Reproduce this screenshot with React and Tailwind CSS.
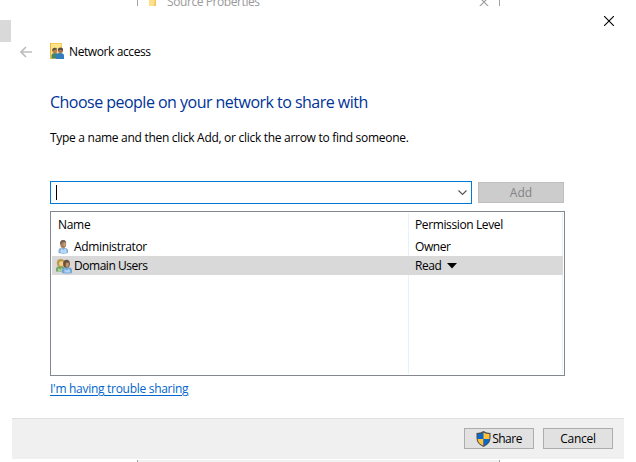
import React from "react";

function FolderUsers() {
  return (
    <svg width="14" height="17" viewBox="0 0 14 17" className="block">
      <path d="M0 0h12v16H0z" fill="#f3cd58" />
      <path d="M1 1h10v14H1z" fill="#ffe389" />
      <path d="M0 0h1v16H0z" fill="#e8b93d" />
      <path d="M1.500 15.500v-3q0-2.500 3.500-2.500t3.500 2.500v3z" fill="#43866a" />
      <circle cx="4.800" cy="7.700" r="2.500" fill="#b98254" />
      <path d="M2.300 8V6q2.500-2.500 5 0l-2 .7z" fill="#5b5440" />
      <path d="M6 16v-3.500q0-2.500 4-2.500t4 2.500V16z" fill="#2f7cc0" />
      <circle cx="10.500" cy="7.500" r="2.500" fill="#a86f48" />
      <path d="M8 7.500V5.700Q10.500 3.500 13 5.700v2L11 6.500z" fill="#504a47" />
    </svg>
  );
}

function Person() {
  return (
    <svg width="16" height="16" viewBox="0 0 16 16" className="block">
      <path d="M2.500 14v-3Q3 8.500 7 8.500T12 11v3q-4.500 1.500-9.500 0z" fill="#86afd8" />
      <path d="M4.500 13.700v-2.500l1-2 2 2 2-2 1 2.500v2.200z" fill="#b8d9f6" />
      <ellipse cx="7.200" cy="5" rx="3" ry="3.900" fill="#a77c5a" />
      <path d="M4.200 5.500V3q.5-2 3-2t3 3L7.500 3z" fill="#6e6258" />
      <path d="M7.500 3.500h2v3.500h-2z" fill="#cba178" />
    </svg>
  );
}

function People() {
  return (
    <svg width="16" height="16" viewBox="0 0 16 16" className="block">
      <path d="M0 13.500v-3q.5-2.500 4.500-2.500t4.500 2.500v3z" fill="#71a269" />
      <path d="M1.800 13v-3L4.500 11.500l1-2 2 3.500z" fill="#a7d293" />
      <circle cx="4.700" cy="5" r="3.900" fill="#bd9b48" />
      <circle cx="5.500" cy="5.700" r="2.400" fill="#f0d094" />
      <path d="M6 15v-3.500q.5-2.500 5-2.500t5 2.500V15q-5 1-10 0z" fill="#72a6d5" />
      <path d="M8.500 14.500V11l2.500 1.500 2-2 1.500 4z" fill="#afd5f5" />
      <ellipse cx="10.500" cy="5.700" rx="3.400" ry="3.900" fill="#69513f" />
      <path d="M10 4.800h2.800v3.500l-1.500 1-1.800-1z" fill="#c69464" />
    </svg>
  );
}

function Shield() {
  return (
    <svg width="15" height="16" viewBox="0.500 0 15 16" className="block">
      <path d="M8 0Q11 2 15 2v5q0 6-7 9Q1 13 1 7V2q4 0 7-2z" fill="#4b5055" />
      <path d="M8 1.400V8H2.100V3Q5.500 3 8 1.400z" fill="#0968c8" />
      <path d="M8 1.400Q10.500 3 13.900 3v5H8z" fill="#ffc13b" />
      <path d="M2.100 8H8v6.800Q2.500 12.500 2.100 8z" fill="#ffc13b" />
      <path d="M8 8h5.900Q13.500 12.500 8 14.800z" fill="#0968c8" />
    </svg>
  );
}

function Cross({ color }) {
  return (
    <svg width="10" height="10" viewBox="0 0 10 10" className="block">
      <path d="M0 0l10 10M10 0L0 10" stroke={color} strokeWidth="1.100" />
    </svg>
  );
}

function PropertiesWindow() {
  return (
    <div className="absolute left-[137px] top-[-10px] h-[472px] w-[363px] border-x border-[#a3a3a3] bg-white text-[#999]">
      <div className="flex h-[24px] items-center pl-[10px] pr-[10px]">
        <svg width="11" height="12" viewBox="0 0 11 12">
          <path d="M1 0h7v10l2 1v1H0v-1l1-1z" fill="#ffe08a" />
          <path d="M7 0h1v10l2 1v1H6z" fill="#f3c75a" />
        </svg>
        <span className="ml-[8px] text-[12px] tracking-[-0.420px]">Source Properties</span>
        <span className="-mt-px ml-auto">
          <Cross color="#999" />
        </span>
      </div>
    </div>
  );
}

export default function App() {
  return (
    <div className="relative h-[462px] w-[636px] overflow-hidden bg-white font-['Open_Sans','Noto_Sans',sans-serif] text-[12px] leading-4 tracking-[-0.290px] text-black">
      <PropertiesWindow />
      <div className="absolute left-0 top-5 h-[22px] w-[11px] bg-[#d9d9d9]" />
      <div className="absolute left-[138px] top-[460px] h-[2px] w-[361px] bg-[#f0f0f0]" />

      <div className="absolute left-3 top-[6px] flex h-[454px] w-[612px] flex-col bg-white">
        <div className="flex h-[37px] justify-end pr-[10px] pt-[10px]">
          <Cross color="#000" />
        </div>
        <div className="flex h-[17px] items-center pl-2">
          <svg width="12" height="12" viewBox="0 0 12 12">
            <path d="M12 6H1M6 1L1 6l5 5" fill="none" stroke="#bdbdbd" strokeWidth="1.700" />
          </svg>
          <div className="ml-[18px]"><FolderUsers /></div>
          <span className="ml-[5px] pt-px tracking-[-0.400px]">Network access</span>
        </div>

        <main className="flex h-[352px] flex-col pl-[38px]">
          <h1 className="mt-[30px] h-6 whitespace-nowrap text-[16px] leading-6 tracking-[-0.520px] text-[#003399]">
            Choose people on your network to share with
          </h1>
          <p className="mt-4 whitespace-nowrap">
            Type a name and then click Add, or click the arrow to find someone.
          </p>

          <div className="mt-[35px] flex items-center gap-[6px]">
            <div className="flex h-[23px] w-[422px] items-center justify-between border border-[#0078d7] pl-[5px] pr-[4px]">
              <span className="h-[15px] w-px bg-black" />
              <svg width="9" height="6" viewBox="0 0 9 6">
                <path d="M.5.5l4 4 4-4" fill="none" stroke="#555" strokeWidth="1.100" />
              </svg>
            </div>
            <button className="h-[21px] w-[86px] border border-[#bfbfbf] bg-[#cccccc] leading-[19px] tracking-normal text-[#838383]">Add</button>
          </div>

          <div className="mt-[7px] flex h-[165px] w-[515px] border border-[#828790] p-px">
            <div className="flex w-[357px] flex-col border-r border-[#e5f1fb]">
              <div className="h-[24px] pl-[6px] pt-[4px]">Name</div>
              <div className="flex h-[19px] items-center pl-[4px]">
                <Person />
                <span className="ml-[2px] tracking-[-0.350px]">Administrator</span>
              </div>
              <div className="-mr-px flex h-[19px] items-center bg-[#d9d9d9] pl-[4px]">
                <People />
                <span className="ml-[2px] tracking-[-0.460px]">Domain Users</span>
              </div>
            </div>
            <div className="flex w-[154px] flex-col border-r border-[#e5f1fb]">
              <div className="h-[24px] pl-[6px] pt-[4px] tracking-[-0.380px]">Permission Level</div>
              <div className="flex h-[19px] items-center pl-[6px] tracking-[-0.450px]">Owner</div>
              <div className="-mr-px flex h-[19px] items-center bg-[#d9d9d9] pl-[6px] tracking-[-0.450px]">
                Read
                <svg width="10" height="6" viewBox="0 0 10 6" className="ml-[6px]">
                  <path d="M0 0h10L5 5.500z" fill="#000" />
                </svg>
              </div>
            </div>
          </div>
          <a className="mt-[5px] self-start whitespace-nowrap text-[#0066cc] underline underline-offset-2">I'm having trouble sharing</a>
        </main>

        <footer className="mb-px mt-auto flex h-[41px] shrink-0 items-start justify-end gap-[9px] border-t border-[#dfdfdf] bg-[#f0f0f0] pr-[11px] pt-[9px]">
          <button className="flex h-[21px] w-[70px] items-center justify-center border border-[#adadad] bg-[#e1e1e1]">
            <Shield />
            <span className="ml-px tracking-[-0.500px]">Share</span>
          </button>
          <button className="flex h-[21px] w-[70px] items-center justify-center border border-[#adadad] bg-[#e1e1e1]">Cancel</button>
        </footer>
      </div>
    </div>
  );
}
